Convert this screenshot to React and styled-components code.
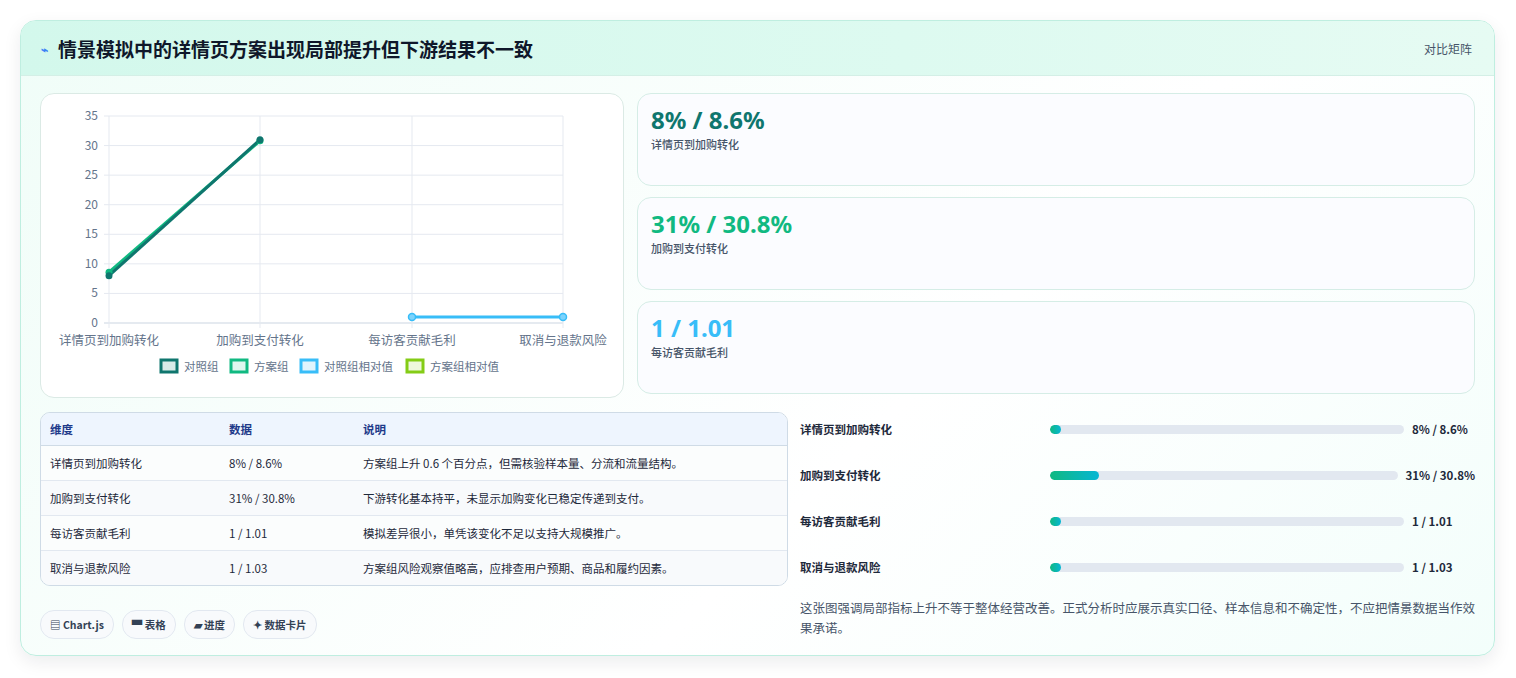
import React from "react";
import styled, { createGlobalStyle } from "styled-components";

const G = createGlobalStyle`
  body{margin:0;background:#fff;font-family:"Noto Sans CJK SC","Noto Sans",sans-serif;color:#1e293b;}
`;
const Page = styled.div`padding:20px 21px 22px 20px;`;
const Card = styled.div`
  border:1px solid #bfeee0;border-radius:16px;overflow:hidden;
  background:linear-gradient(135deg,#f0fdf8,#ffffff 60%,#f3fefb);
  box-shadow:0 6px 18px rgba(15,23,42,.08);
`;
const Header = styled.div`
  height:54px;display:flex;align-items:center;justify-content:space-between;
  padding:0 22px 0 20px;background:linear-gradient(90deg,#d3f8ec,#ddfaf0 60%,#e6fbf3);
  border-bottom:1px solid #d4efe6;
`;
const Title = styled.h1`margin:0;font-size:19px;font-weight:700;color:#0f172a;display:flex;align-items:center;gap:10px;`;
const Small = styled.span`font-size:12px;color:#475569;`;
const Body = styled.div`padding:17px 19px 16px 19px;display:flex;flex-direction:column;gap:14px;`;
const Top = styled.div`display:grid;grid-template-columns:584px 1fr;gap:13px;`;
const Panel = styled.div`background:#fff;border:1px solid #dbeae5;border-radius:14px;height:303px;`;
const Stats = styled.div`display:flex;flex-direction:column;gap:11px;`;
const Stat = styled.div`background:#fbfcff;border:1px solid #d5ede6;border-radius:14px;height:93px;box-sizing:border-box;padding:10px 13px;`;
const StatVal = styled.div`font-size:24px;font-weight:700;color:${p=>p.c};line-height:32px;font-family:"Noto Sans","Noto Sans CJK SC",sans-serif;`;
const StatLbl = styled.div`font-size:11px;color:#475569;font-weight:500;`;
const Bottom = styled.div`display:grid;grid-template-columns:748px 1fr;gap:12px;`;
const Table = styled.table`width:100%;border-collapse:separate;border-spacing:0;border:1px solid #cfdbe6;border-radius:10px;overflow:hidden;font-size:11.5px;`;
const Th = styled.th`text-align:left;font-weight:600;color:#1e3a8a;background:#eef5fe;height:32px;padding:0 9px;border-bottom:1px solid #cfdbe6;`;
const Td = styled.td`height:34px;padding:0 9px;color:#1e293b;background:${p=>p.alt?"#f8fafc":"#fbfdfd"};border-top:${p=>p.first?"none":"1px solid #e2e8f0"};`;
const Chips = styled.div`display:flex;gap:8px;margin-top:24px;`;
const Chip = styled.span`font-size:10.5px;font-weight:600;color:#334155;border:1px solid #e2e8f0;background:#f8fafc;border-radius:14px;padding:6px 9px;`;
const Bars = styled.div`display:flex;flex-direction:column;margin-top:-6px;`;
const BarRow = styled.div`display:flex;align-items:center;height:46px;font-size:11.5px;font-weight:600;`;
const BarLbl = styled.div`width:250px;flex:none;`;
const Track = styled.div`flex:1;height:9px;border-radius:5px;background:#e2e8f0;overflow:hidden;`;
const Fill = styled.div`height:100%;border-radius:5px;background:linear-gradient(90deg,#10b981,#06b6d4);`;
const BarVal = styled.div`flex:none;margin-left:8px;min-width:63px;font-weight:700;`;
const Note = styled.p`margin:8px 0 0;font-size:12.5px;line-height:20px;color:#475569;`;

const rows=[["详情页到加购转化","8% / 8.6%","方案组上升 0.6 个百分点，但需核验样本量、分流和流量结构。",3],["加购到支付转化","31% / 30.8%","下游转化基本持平，未显示加购变化已稳定传递到支付。",14],["每访客贡献毛利","1 / 1.01","模拟差异很小，单凭该变化不足以支持大规模推广。",3],["取消与退款风险","1 / 1.03","方案组风险观察值略高，应排查用户预期、商品和履约因素。",3]];

const X0=68,X1=522,Y0=22,Y1=229;
const xs=[68,219,371,522];
const y=v=>Y1-v/35*(Y1-Y0);
function Chart(){
  const tc="#64748b";
  return <svg width="584" height="303">
    {[0,5,10,15,20,25,30,35].map(v=><g key={v}><line x1={X0-5} x2={X1} y1={y(v)} y2={y(v)} stroke={v===0?"#cbd5e1":"#e5e9f0"}/><text x={X0-11} y={y(v)+4} fontSize="12" fill={tc} textAnchor="end">{v}</text></g>)}
    {xs.map((x,i)=><g key={i}><line x1={x} x2={x} y1={Y0} y2={Y1+5} stroke="#e5e9f0"/><text x={x} y={251} fontSize="12.5" fill={tc} textAnchor="middle">{["详情页到加购转化","加购到支付转化","每访客贡献毛利","取消与退款风险"][i]}</text></g>)}
    <line x1={xs[0]} y1={y(8.6)} x2={xs[1]} y2={y(30.8)} stroke="#10b981" strokeWidth="3"/>
    <line x1={xs[0]} y1={y(8)} x2={xs[1]} y2={y(31)} stroke="#0f766e" strokeWidth="3"/>
    <circle cx={xs[0]} cy={y(8.6)} r="3.5" fill="#10b981"/><circle cx={xs[1]} cy={y(30.8)} r="3.5" fill="#10b981"/>
    <circle cx={xs[0]} cy={y(8)} r="3.5" fill="#0f766e"/><circle cx={xs[1]} cy={y(31)} r="3.5" fill="#0f766e"/>
    <line x1={xs[2]} y1={y(1)} x2={xs[3]} y2={y(1)} stroke="#38bdf8" strokeWidth="3"/>
    <circle cx={xs[2]} cy={y(1)} r="3.5" fill="#7dd3fc" stroke="#38bdf8" strokeWidth="1.5"/><circle cx={xs[3]} cy={y(1)} r="3.5" fill="#7dd3fc" stroke="#38bdf8" strokeWidth="1.5"/>
    {[["对照组","#0f766e","#d8ebe8",120],["方案组","#10b981","#def7ee",190],["对照组相对值","#38bdf8","#e0f4fd",260],["方案组相对值","#84cc16","#eef8dd",366]].map(([t,c,f,x])=><g key={t}><rect x={x} y={266} width={16} height={12} fill={f} stroke={c} strokeWidth="3"/><text x={x+23} y={277} fontSize="11.5" fill={tc}>{t}</text></g>)}
  </svg>;
}

export default function App(){
  return <><G/><Page><Card>
    <Header><Title><span style={{color:"#3b82f6",fontSize:12}}>⌁</span>情景模拟中的详情页方案出现局部提升但下游结果不一致</Title><Small>对比矩阵</Small></Header>
    <Body>
      <Top>
        <Panel><Chart/></Panel>
        <Stats>
          <Stat><StatVal c="#0f766e">8% / 8.6%</StatVal><StatLbl>详情页到加购转化</StatLbl></Stat>
          <Stat><StatVal c="#10b981">31% / 30.8%</StatVal><StatLbl>加购到支付转化</StatLbl></Stat>
          <Stat><StatVal c="#38bdf8">1 / 1.01</StatVal><StatLbl>每访客贡献毛利</StatLbl></Stat>
        </Stats>
      </Top>
      <Bottom>
        <div>
          <Table><thead><tr><Th style={{width:161}}>维度</Th><Th style={{width:116}}>数据</Th><Th>说明</Th></tr></thead>
          <tbody>{rows.map((r,i)=><tr key={i}>{r.slice(0,3).map((c,j)=><Td key={j} alt={i%2===1} first={i===0}>{c}</Td>)}</tr>)}</tbody></Table>
          <Chips><Chip>▤ Chart.js</Chip><Chip>▀ 表格</Chip><Chip>▰ 进度</Chip><Chip>✦ 数据卡片</Chip></Chips>
        </div>
        <div>
          <Bars>{rows.map((r,i)=><BarRow key={i}><BarLbl>{r[0]}</BarLbl><Track><Fill style={{width:r[3]+"%"}}/></Track><BarVal>{r[1]}</BarVal></BarRow>)}</Bars>
          <Note>这张图强调局部指标上升不等于整体经营改善。正式分析时应展示真实口径、样本信息和不确定性，不应把情景数据当作效果承诺。</Note>
        </div>
      </Bottom>
    </Body>
  </Card></Page></>;
}
